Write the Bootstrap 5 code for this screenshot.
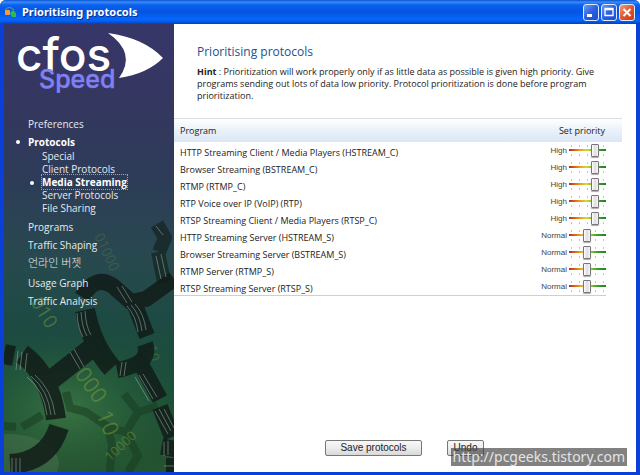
<!DOCTYPE html>
<html lang="en">
<head>
<meta charset="utf-8">
<meta name="viewport" content="width=device-width, initial-scale=1">
<title>Prioritising protocols</title>
<link href="https://cdn.jsdelivr.net/npm/bootstrap@5.3.0/dist/css/bootstrap.min.css" rel="stylesheet">
<style>
body{font-family:"Open Sans","Noto Sans CJK KR",sans-serif;font-size:9px;line-height:12px;color:#222;background:#fff}
.win{border:solid #0a3fd8;border-width:0 4px 3px;border-radius:6px 6px 0 0;background:#fff}
.titlebar{height:24px;margin:0 -4px;padding:0 5px 0 4px;border-radius:6px 6px 0 0;background:linear-gradient(#0a4fd0 0,#3b8cf8 2px,#0a62ee 5px,#0455e0 12px,#0566fb 19px,#0560f2 21px,#0340b8 24px)}
.titlebar h1{font:bold 11px/24px "Noto Sans",sans-serif;color:#fff;text-shadow:1px 1px 0 #0a2f8c}
.caps{gap:2px}
.cap{width:16px;height:17px;padding:0;border:1px solid #dfe8ff;border-radius:3px;background:linear-gradient(135deg,#6f9bf8,#2a5fe0 50%,#1c4fd0)}
.cap-close{background:linear-gradient(135deg,#f0a080,#e0552c 50%,#c83c14)}
.cap svg,.titlebar svg{display:block}
.side{width:170px;background:linear-gradient(#37366a 0,#34375f 18%,#2d3c58 35%,#28494f 52%,#1d4a43 66%,#1c4f38 82%,#24532f 100%)}
.art{position:absolute;left:0;bottom:0;width:100%;height:100%}
.logo{display:block;width:170px;height:76px}
.menu{margin:15px 0 0 24px;font-size:10px;line-height:18px}
.menu a{color:#e6eaee;text-decoration:none}
.menu ul{margin:-1px 0 3px 14px;line-height:13px}
.menu .on{position:relative}
.menu .on>a{color:#fff;font-weight:700}
.menu .on::before{content:"";position:absolute;left:-12px;top:7px;width:4px;height:4px;border-radius:50%;background:#fff}
.menu ul .on::before{top:5px}
.menu ul .on a{outline:1px dotted #9aa2aa}
.kor{height:20px;font-size:11px}
.kor a{font-weight:300}
.intro{margin:19px 36px 0 23px}
.intro h2{font-size:12px;line-height:18px;color:#23508f;margin-bottom:5px}
.thead-row th{font-weight:400;font-size:9px;height:24px;background:linear-gradient(#fff,#e9f1fb 50%,#dbe6f5);border-top:1px solid #dcdcdc}
.prio{margin:16px 14px 0 0}
.prio table{border-collapse:separate;border-spacing:0}
.prio td{height:17px;padding:0}
.prio .name{padding:4px 0 0 6px;line-height:13px}
.prio th:first-child{padding-left:6px}
.prio label{font:8px/10px "Liberation Sans",sans-serif;color:#444}
.setter{margin-right:15px}
.rule{height:1px;background:#cfcfcf;margin-right:16px}
.level{-webkit-appearance:none;appearance:none;display:block;width:40px;height:15px;margin:0;
 background:linear-gradient(90deg,#c02818,#e8a020 30%,#d8d830 48%,#40a030 75%,#188818) 2px 6px/37px 2px no-repeat,
 repeating-linear-gradient(90deg,#c4c4c4 0 1px,transparent 1px 8px) 4px 2px/36px 2px no-repeat,
 repeating-linear-gradient(90deg,#c4c4c4 0 1px,transparent 1px 8px) 4px 11px/36px 2px no-repeat}
.level::-webkit-slider-thumb{-webkit-appearance:none;width:8px;height:13px;border:1px solid #777;border-radius:1px;background:linear-gradient(90deg,#fff,#ddd 50%,#f6f6f6);box-shadow:0 1px 1px #aaa}
.level::-moz-range-thumb{width:6px;height:11px;border:1px solid #777;border-radius:1px;background:#e8e8e8}
.act{height:16px;padding:0;border:1px solid #777;border-radius:2px;background:linear-gradient(#f8f8f8,#ececec 50%,#d8d8d8);color:#222;font:10px/14px "Liberation Sans",sans-serif}
.save{width:97px}.undo{width:37px}
.actions{gap:25px;margin:0 152px 16px 0}
.stamp{position:absolute;right:9px;bottom:6px;height:18px;padding:0 2px;background:rgba(70,70,70,.68);color:#e4e4e4;font:14px/17px "Noto Sans",sans-serif}
</style>
<script src="https://cdn.jsdelivr.net/npm/bootstrap@5.3.0/dist/js/bootstrap.bundle.min.js"></script>
</head>
<body>
<div class="win min-vh-100 d-flex flex-column position-relative">
<header class="titlebar d-flex align-items-center">
<svg width="14" height="12" viewBox="0 0 14 12" class="me-1" aria-hidden="true"><path d="M1 4Q5-1 10 4" fill="none" stroke="#5aa0a0"/><rect x="1" y="4" width="5" height="5" rx="1" fill="#f09a48"/><path d="M6 7l3-3 3 3v4H8z" fill="#35b848"/></svg>
<h1 class="m-0 flex-grow-1">Prioritising protocols</h1>
<div class="caps d-flex">
<button class="cap" aria-label="Minimize"><svg width="14" height="15"><path d="M3 10.500h5" stroke="#fff" stroke-width="3"/></svg></button>
<button class="cap" aria-label="Maximize"><svg width="14" height="15"><path d="M3 3.500h8v7H3zM3 4.500h8" fill="none" stroke="#fff" stroke-width="1.300"/></svg></button>
<button class="cap cap-close" aria-label="Close"><svg width="14" height="15"><path d="M3.500 4l7 7m0-7l-7 7" stroke="#fff" stroke-width="2"/></svg></button>
</div>
</header>
<div class="d-flex flex-grow-1">
<aside class="side position-relative flex-shrink-0 overflow-hidden">
<svg class="art" viewBox="0 0 170 448" preserveAspectRatio="xMidYMax slice" aria-hidden="true">
<defs><radialGradient id="glow"><stop offset="0" stop-color="#4c8a4a" stop-opacity=".6"/><stop offset="1" stop-color="#2c6a3a" stop-opacity="0"/></radialGradient></defs>
<ellipse cx="65" cy="385" rx="110" ry="75" fill="url(#glow)"/>
<ellipse cx="5" cy="440" rx="50" ry="30" fill="#8a9a80" opacity=".18"/>
<g fill="none" stroke="#173d20" stroke-opacity=".55" stroke-width="8"><path d="M0 402l12 1M18 403l20-12M62 368l4 16 16 4 22 15 4 18-2 27M104 404l18 4 12-20-14-18M122 408l12 24-10 16M134 388l20-6"/></g>
<g fill="#9fb83a" font-family="Open Sans,sans-serif" opacity=".35"><text transform="translate(26 278) rotate(58)" font-size="19">010</text><text transform="translate(70 350) rotate(55)" font-size="22">000</text><text transform="translate(92 390) rotate(68)" font-size="22">10</text><text transform="translate(106 438) rotate(-43)" font-size="13">10000</text><text transform="translate(90 212) rotate(65)" font-size="14" opacity=".5">01000</text><text transform="translate(143 322) rotate(80)" font-size="14" opacity=".7">10</text></g>
<g fill="none" stroke="#111c18" stroke-opacity=".84" stroke-width="16" stroke-linejoin="round">
<path d="M0 330l10 2M18 330Q46 350 52 395M42 360L90 322M81 286Q88 322 108 344M6 440Q44 438 55 403" stroke-width="20"/>
<path d="M78 273Q92 250 109 262L127 278L142 275L170 255M129 276l14 36M141 320Q148 340 113 346M138 342l18 33M156 383l12 30M167 416l-3 16M162 442h8"/>
<path d="M153 200l8 14-6 14M154 228l6 30" stroke-width="14" stroke-opacity=".6"/>
</g>
<g fill="none" stroke="#a9b4ae" stroke-opacity=".5"><path d="M14 327l-2 19M18 328l-2 18M23 329l-2 18M23 353Q40 366 43 391M27 352Q44 366 47 391M31 351Q48 366 51 391M73 289q1 16 6 24M77 288q1 16 6 24M81 287q1 16 6 24M66 328l10 17M70 325l10 18M123 282q9 10 11 26M127 281q9 10 11 26M131 280q9 10 11 26M131 353l14 24M135 351l14 24M139 350l14 23M151 387l13 23M155 385l12 22M160 385l10 19M160 418v14M164 417v14M118 338l-2 14M122 338l-2 14M113 263l10 16M118 262l10 16M152 232l5 23M157 230l5 23M152 202l7 9M8 434v14M12 434v14M16 434v14M160 442h10"/></g>
</svg>
<svg class="logo position-relative" viewBox="0 0 170 76" role="img" aria-label="cfos Speed">
<text x="12" y="47" font-family="Inter,sans-serif" font-size="46" font-weight="500" fill="#fff">cfos</text>
<text x="35" y="64" font-family="Inter,sans-serif" font-size="25" font-weight="500" fill="#8080f4" stroke="#8080f4" stroke-width=".4">Speed</text>
<path d="M104 9Q140 14 159 34Q143 50 115 54Q133 29 104 9Z" fill="#fff"/>
</svg>
<nav class="position-relative" aria-label="Settings">
<ul class="menu list-unstyled">
<li><a href="#">Preferences</a></li>
<li class="on"><a href="#">Protocols</a></li>
<li><ul class="list-unstyled">
<li><a href="#">Special</a></li><li><a href="#">Client Protocols</a></li><li class="on"><a href="#">Media Streaming</a></li><li><a href="#">Server Protocols</a></li><li><a href="#">File Sharing</a></li>
</ul></li>
<li><a href="#">Programs</a></li><li><a href="#">Traffic Shaping</a></li><li class="kor" lang="ko"><a href="#">언라인 버젯</a></li><li><a href="#">Usage Graph</a></li><li><a href="#">Traffic Analysis</a></li>
</ul>
</nav>
</aside>
<main class="flex-grow-1 d-flex flex-column">
<section class="intro"><h2>Prioritising protocols</h2>
<p class="m-0"><b>Hint</b> : Prioritization will work properly only if as little data as possible is given high priority. Give programs sending out lots of data low priority. Protocol prioritization is done before program prioritization.</p></section>
<section class="prio">
<table class="w-100">
<thead class="thead-row"><tr><th scope="col">Program</th><th scope="col" class="text-end"><div class="me-3">Set priority</div></th></tr></thead>
<tbody id="rows"></tbody>
</table>
<div class="rule"></div>
</section>
<div class="actions d-flex justify-content-end mt-auto"><button class="act save">Save protocols</button><button class="act undo">Undo</button></div>
</main>
</div>
<div class="stamp">http://pcgeeks.tistory.com</div>
</div>
<script>
const levels={2:'Normal',3:'High'};
const programs=[['HTTP Streaming Client / Media Players (HSTREAM_C)',3],['Browser Streaming (BSTREAM_C)',3],['RTMP (RTMP_C)',3],['RTP Voice over IP (VoIP) (RTP)',3],['RTSP Streaming Client / Media Players (RTSP_C)',3],['HTTP Streaming Server (HSTREAM_S)',2],['Browser Streaming Server (BSTREAM_S)',2],['RTMP Server (RTMP_S)',2],['RTSP Streaming Server (RTSP_S)',2]];
document.getElementById('rows').innerHTML=programs.map(([n,v],i)=>`<tr><td class="name">${n}</td><td><div class="setter d-flex justify-content-end align-items-center"><label for="p${i}">${levels[v]}</label><input class="level" id="p${i}" type="range" min="0" max="4" value="${v}"></div></td></tr>`).join('');
</script>
</body>
</html>
